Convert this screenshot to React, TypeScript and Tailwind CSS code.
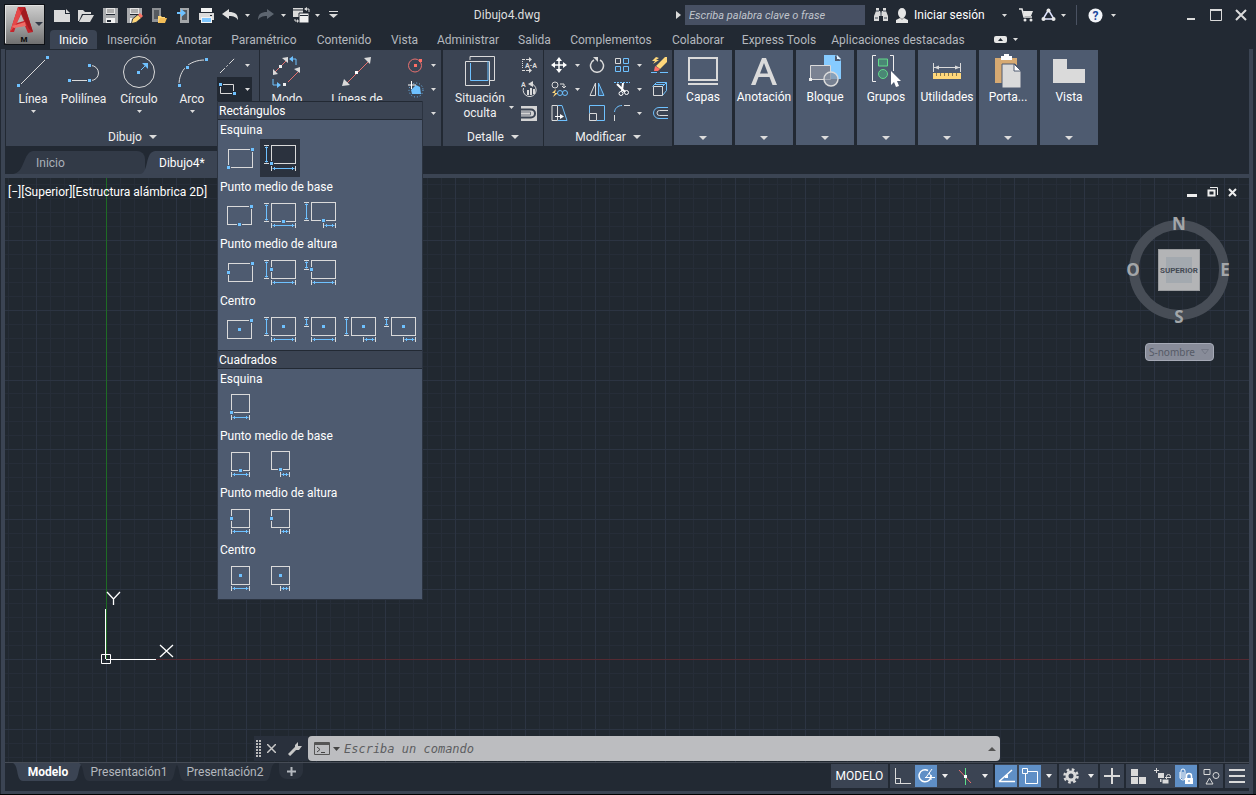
import type { ReactNode } from "react";
import clsx from "clsx";

const L = "#dadada";
const B = "#6ec1ff";

function Svg({ w, h, children }: { w: number; h: number; children: ReactNode }) {
  return (
    <svg width={w} height={h} viewBox={`0 0 ${w} ${h}`} fill="none" className="block shrink-0" aria-hidden="true">
      {children}
    </svg>
  );
}

function Caret({ big = false }: { big?: boolean }) {
  return big ? (
    <Svg w={8} h={4}><path d="M0 0h8L4 4z" fill="#dcdcdc" /></Svg>
  ) : (
    <Svg w={5} h={3}><path d="M0 0h5L2.500 3z" fill="#dcdcdc" /></Svg>
  );
}

function Btn({ label, className, children }: { label: string; className?: string; children: ReactNode }) {
  return (
    <button type="button" aria-label={label} title={label} className={clsx("flex shrink-0 items-center justify-center", className)}>
      {children}
    </button>
  );
}

function Dot({ x, y, halo = "#3b4453" }: { x: number; y: number; halo?: string }) {
  return (
    <>
      <rect x={x - 2.5} y={y - 2.5} width={5} height={5} fill={halo} />
      <rect x={x - 1.5} y={y - 1.5} width={3} height={3} fill={B} />
    </>
  );
}

/* ---------- Barra de título ---------- */

const quickAccess: { label: string; width: string; icon: ReactNode }[] = [
  { label: "Nuevo", width: "w-6", icon: <Svg w={18} h={16}><path d="M1 3h11v4h5v8H1zM13 2l4 4h-4z" fill={L} /></Svg> },
  { label: "Abrir", width: "w-6", icon: <Svg w={18} h={16}><path d="M1 14V3h5l2 2h6v2H5L2 14z" fill={L} /><path d="M6 8h11l-4 7H2z" fill={L} /></Svg> },
  { label: "Guardar", width: "w-6", icon: <Svg w={17} h={17}><path d="M1 1h3v7h9V1h3v15H1z" fill="#a9abae" /><path d="M4 1h9v6H4z" fill="#e4e4e4" /><path d="M1 8h15v2H1z" fill="#a9abae" /><path d="M4 11h9v5H4z" fill="#f2f2f2" /><path d="M5 13h4v2H5z" fill="#222933" /><path d="M5 3h7M5 5h7" stroke="#777" /></Svg> },
  { label: "Guardar como", width: "w-6", icon: <Svg w={17} h={17}><path d="M1 1h3v7h9V1h3v8l-6 7H1z" fill="#a9abae" /><path d="M4 1h9v6H4z" fill="#e4e4e4" /><path d="M5 3h7M5 5h7" stroke="#777" /><path d="M4 11h7l-5 5H4z" fill="#f2f2f2" /><path d="M5 17l1-5 6-5 4 4-6 5z" fill="#222933" /><path d="M6 16l1-4 5-4 3 3-5 4z" fill="#ffd77a" /><path d="M12 8l2-2 3 3-2 2z" fill="#ff7466" /></Svg> },
  { label: "Abrir desde web", width: "w-6", icon: <Svg w={17} h={17}><path d="M2 1h9v14H2z" fill="#8d9094" /><path d="M4 3h5v9H4z" fill="#555a60" /><path d="M8 9h3l1 1h3v6H8z" fill="#ffd77a" /><path d="M10 11h7l-2 5H8z" fill="#f3bd57" /></Svg> },
  { label: "Guardar en web", width: "w-6", icon: <Svg w={17} h={17}><path d="M6 1h9v15H6z" fill="#a4a7aa" /><path d="M8 3h5v10H8z" fill="#555a60" /><path d="M3 5h4V2l5 4-5 4V7H3z" fill={B} /></Svg> },
  { label: "Trazar", width: "w-6", icon: <Svg w={17} h={17}><path d="M3 1h11v4H3z" fill="#f2f2f2" /><path d="M1 6h15v7H1z" fill="#dadada" /><path d="M12 8h2v1h-2z" fill="#222933" /><path d="M3 10h11v6H3z" fill="#f2f2f2" /><path d="M4 11h9v4H4z" fill="#7ec6ff" /></Svg> },
  { label: "Deshacer", width: "w-6", icon: <Svg w={17} h={13}><path d="M0 5l7-5v3c6 0 9 2 9 8-2-3-4-4-9-4v3z" fill="#e0e0e0" /></Svg> },
  { label: "Opciones de deshacer", width: "w-[10px]", icon: <Caret /> },
  { label: "Rehacer", width: "w-[26px]", icon: <Svg w={17} h={13}><path d="M17 5l-7-5v3C4 3 1 5 1 11c2-3 4-4 9-4v3z" fill="#5d6570" /></Svg> },
  { label: "Opciones de rehacer", width: "w-[10px]", icon: <Caret /> },
  { label: "Cambiar ventana", width: "w-[26px]", icon: <Svg w={18} h={16}><path d="M1 1h10v9H1z" fill="#dadada" /><path d="M1 3h10" stroke="#222933" /><path d="M7 6h10v10H7z" fill="#f0f0f0" stroke="#222933" /><path d="M8 8.500h8" stroke="#222933" /><path d="M13 2h4v3M3 12v2h3" stroke={L} /><path d="M15 0v4l-3-2zM5 12v4l2-2z" fill={L} /></Svg> },
  { label: "Ventanas", width: "w-[6px]", icon: <Caret /> },
  { label: "Personalizar barra", width: "w-[26px]", icon: <Svg w={9} h={8}><path d="M0 .5h9" stroke={L} /><path d="M0 3h9L4.500 7z" fill={L} /></Svg> },
];

function TitleBar() {
  return (
    <div className="flex h-[30px] items-center">
      {quickAccess.map((q) => (
        <Btn key={q.label} label={q.label} className={clsx("h-6", q.width)}>{q.icon}</Btn>
      ))}
      <h1 className="flex-1 pr-2 text-center text-xs font-normal text-[#dedede]">Dibujo4.dwg</h1>
      <Svg w={5} h={8}><path d="M0 0v8l5-4z" fill={L} /></Svg>
      <input
        type="text"
        aria-label="Buscar"
        placeholder="Escriba palabra clave o frase"
        className="ml-1 h-5 w-[180px] bg-[#475063] px-1 text-[11px] italic text-white outline-none placeholder:text-[#c0c5cc]"
      />
      <Btn label="Búsqueda" className="ml-[6px] h-6 w-5">
        <Svg w={16} h={16}>
          <path d="M3 1h3v3h1l1 2 1-2h1V1h3v3l2 5v5h-5V9H6v5H1V9l2-5z" fill="#dadada" />
          <path d="M3 4h3M10 4h3M2 11h3M11 11h3M8 5v4" stroke="#3b4453" />
        </Svg>
      </Btn>
      <button type="button" className="ml-1 flex h-6 items-center gap-[5px] text-xs text-white">
        <Svg w={14} h={15}><ellipse cx="7" cy="5" rx="4" ry="5" fill="#e6e6e6" /><path d="M5 8h4v3H5z" fill="#e6e6e6" /><path d="M1 15v-3l4-2h4l4 2v3z" fill="#e6e6e6" /><path d="M5 9.500l2 2 2-2" stroke="#888" /></Svg>
        <span className="w-[76px] whitespace-nowrap text-left">Iniciar sesión</span>
      </button>
      <Btn label="Cuenta" className="ml-1 h-6 w-5"><Caret /></Btn>
      <Btn label="Tienda" className="h-6 w-6">
        <Svg w={15} h={14}><path d="M0 1h3l2 8h8" stroke="#e6e6e6" strokeWidth="1.500" /><path d="M4 3h10l-2 5H5z" fill="#e6e6e6" /><circle cx="6" cy="12" r="1.500" fill="#e6e6e6" /><circle cx="12" cy="12" r="1.500" fill="#e6e6e6" /></Svg>
      </Btn>
      <Btn label="Aplicaciones" className="h-6 w-5">
        <Svg w={15} h={14}><path d="M7.500 2L2 11h11z" stroke="#dfe3ff" strokeWidth="1.500" /><circle cx="7.500" cy="2.500" r="2" fill="#e6e6e6" /><circle cx="2.500" cy="11" r="2" fill="#e6e6e6" /><circle cx="12.500" cy="11" r="2" fill="#e6e6e6" /></Svg>
      </Btn>
      <Btn label="Más aplicaciones" className="h-6 w-[10px]"><Caret /></Btn>
      <span className="ml-2 h-5 w-px bg-[#4a5262]" />
      <Btn label="Ayuda" className="ml-2 h-6 w-5">
        <svg width="15" height="15" viewBox="0 0 15 15" aria-hidden="true">
          <circle cx="7.500" cy="7.500" r="7" fill="#f2f4f8" />
          <text x="7.500" y="12" textAnchor="middle" fontSize="12" fontWeight="700" fill="#1d4a9e">?</text>
        </svg>
      </Btn>
      <Btn label="Más ayuda" className="h-6 w-4"><Caret /></Btn>
      <Btn label="Minimizar" className="ml-[57px] h-6 w-[25px]"><Svg w={8} h={9}><path d="M0 7h8v2H0z" fill={L} /></Svg></Btn>
      <Btn label="Maximizar" className="h-6 w-[25px]"><Svg w={12} h={12}><path d="M.5 1h11v10.500H.5z" stroke={L} /><path d="M0 1h12" stroke={L} strokeWidth="2" /></Svg></Btn>
      <Btn label="Cerrar" className="mr-[3px] h-6 w-[25px]"><Svg w={12} h={12}><path d="M1 1l10 10M11 1L1 11" stroke={L} strokeWidth="2" /></Svg></Btn>
    </div>
  );
}

const ribbonTabs = [
  { name: "Inicio", width: "w-[47px]" },
  { name: "Inserción", width: "w-[69px]" },
  { name: "Anotar", width: "w-[56px]" },
  { name: "Paramétrico", width: "w-[84px]" },
  { name: "Contenido", width: "w-[76px]" },
  { name: "Vista", width: "w-[45px]" },
  { name: "Administrar", width: "w-[82px]" },
  { name: "Salida", width: "w-[51px]" },
  { name: "Complementos", width: "w-[102px]" },
  { name: "Colaborar", width: "w-[72px]" },
  { name: "Express Tools", width: "w-[90px]" },
  { name: "Aplicaciones destacadas", width: "w-[148px]" },
];

function RibbonTabs() {
  return (
    <nav className="flex h-[19px] items-stretch text-xs">
      {ribbonTabs.map((t, i) => (
        <button
          key={t.name}
          type="button"
          className={clsx(
            "flex shrink-0 items-center justify-center whitespace-nowrap leading-4",
            t.width,
            i === 0 ? "rounded-t-sm bg-[#3b4453] text-white" : "text-[#b4b8be]"
          )}
        >
          {t.name}
        </button>
      ))}
      <Btn label="Minimizar cinta" className="ml-[22px] gap-[6px]">
        <Svg w={13} h={7}><rect width="13" height="7" rx="2" fill="#e6e6e6" /><path d="M4 5h5L6.500 2z" fill="#222933" /></Svg>
        <Caret />
      </Btn>
    </nav>
  );
}

function AppButton() {
  return (
    <button type="button" aria-label="Menú de la aplicación" className="block h-[41px] w-[41px]">
      <svg width="41" height="41" viewBox="0 0 41 41" aria-hidden="true" className="block">
        <defs>
          <linearGradient id="app-bg" x1="0" y1="0" x2="0" y2="1">
            <stop offset="0" stopColor="#cfcfcf" />
            <stop offset="0.5" stopColor="#a4a4a4" />
            <stop offset="1" stopColor="#6e6e6e" />
          </linearGradient>
        </defs>
        <rect x="0.5" y="0.5" width="40" height="40" fill="url(#app-bg)" stroke="#0e1116" />
        <path d="M1.500 39V1.500H39" fill="none" stroke="#e2e2e2" />
        <path d="M6 28L14 3h7l8 25-5 1-3-7h-9l-2 6z" fill="#c3242b" />
        <path d="M14 3l3 6-4 10-3 4-4 5z" fill="#e5484a" />
        <path d="M17 10l-4 9 7-2z" fill="#b9b9b9" />
        <path d="M21 3l8 25-4-3-8-16z" fill="#a11a20" />
        <path d="M8 22l13-4 1 4-12 2z" fill="#ef6b66" />
        <path d="M31 18h8l-4 4z" fill="#343b47" />
        <text x="20" y="38" textAnchor="middle" fontSize="8" fontWeight="800" fill="#111">M</text>
      </svg>
    </button>
  );
}

/* ---------- Cinta de opciones ---------- */

function BigTool({ label, width, icon, caret = true }: { label: string; width: string; icon: ReactNode; caret?: boolean }) {
  return (
    <button type="button" className={clsx("flex shrink-0 flex-col items-center pt-px text-xs text-[#f0f0f0]", width)}>
      <span className="flex h-9 items-center">{icon}</span>
      <span className="mt-[2px] whitespace-nowrap leading-[14px]">{label}</span>
      {caret && <span className="mt-1"><Caret /></span>}
    </button>
  );
}

function Panel({ title, className, children }: { title: string; className: string; children: ReactNode }) {
  return (
    <section className={clsx("flex h-24 shrink-0 flex-col bg-[#3b4453]", className)}>
      <div className="flex h-[77px] pt-[3px]">{children}</div>
      <button type="button" className="flex h-[19px] items-center justify-center gap-[7px] text-xs text-[#f0f0f0]">
        {title}
        {title && <Caret big />}
      </button>
    </section>
  );
}

const modifyTools: { label: string; caret: boolean; icon: ReactNode }[] = [
  { label: "Desplazar", caret: true, icon: <Svg w={16} h={16}><path d="M8 2v12M2 8h12" stroke="#fff" strokeWidth="1.500" /><path d="M8 0l3 4H5zM8 16l3-4H5zM0 8l4-3v6zM16 8l-4-3v6z" fill="#fff" /></Svg> },
  { label: "Girar", caret: false, icon: <Svg w={16} h={16}><path d="M11 3a6.500 6.500 0 1 1-6 0" stroke={L} strokeWidth="1.500" /><path d="M4 0h5v5z" fill={L} /></Svg> },
  { label: "Matriz", caret: true, icon: <Svg w={16} h={16}><path d="M1.500 1.500h5v5h-5z" stroke={L} /><path d="M9.500 1.500h5v5h-5zM1.500 9.500h5v5h-5zM9.500 9.500h5v5h-5z" stroke={B} /></Svg> },
  { label: "Borrar", caret: false, icon: <Svg w={17} h={17}><path d="M16 0v5l-7 7-4-3 9-9z" fill="#ffd77a" /><path d="M4 9l5 3-2 2H3z" fill="#ff6f66" /><path d="M5 0L1 4h3L2 7l6-4H5l3-2z" fill="#ffd77a" /><path d="M0 15.500h6M9 15.500h8" stroke={B} /></Svg> },
  { label: "Copiar", caret: true, icon: <Svg w={17} h={17}><circle cx="4" cy="4" r="3" stroke={L} /><path d="M9 3h4v4M11 5l2 2 2-2" stroke={L} /><path d="M5 8l-4 4h3l-2 4 5-4H4z" fill="#ffd77a" /><circle cx="9" cy="12" r="2.500" stroke={B} /><circle cx="14" cy="12" r="2.500" stroke={B} /></Svg> },
  { label: "Simetría", caret: false, icon: <Svg w={16} h={16}><path d="M6.500 2v12.500H1z" stroke={L} /><path d="M9.500 2v12.500H15z" fill="#3f5f80" stroke={B} /></Svg> },
  { label: "Recortar", caret: true, icon: <Svg w={16} h={16}><path d="M0 1.500h16" stroke={B} strokeDasharray="2 1" /><path d="M3 3l8 8M9 2l-1 8" stroke="#fff" strokeWidth="2" /><circle cx="7" cy="12.500" r="2" stroke="#fff" /><circle cx="12.500" cy="11.500" r="2" stroke="#fff" /></Svg> },
  { label: "Alargar", caret: false, icon: <Svg w={17} h={16}><path d="M1.500 5.500l4-4h10v8l-4 5M11.500 5.500l4-4M3 3.500h10" stroke={B} /><path d="M2.500 5.500h9v9h-9z" stroke={L} /></Svg> },
  { label: "Estirar", caret: false, icon: <Svg w={17} h={16}><path d="M1 .5h5.500v15H1z" stroke={L} /><path d="M7 .5h4l5 15H7" stroke={B} /><path d="M4 11.500h6" stroke="#fff" /><path d="M9 9l4 2.500L9 14z" fill="#fff" /></Svg> },
  { label: "Escala", caret: false, icon: <Svg w={16} h={16}><path d="M.5 8V.5h15v15H8" stroke={B} /><path d="M.5 8.500h7v7h-7z" stroke={L} /></Svg> },
  { label: "Empalme", caret: true, icon: <Svg w={16} h={16}><path d="M.5 7C1 3 4 .5 8 .5" stroke={B} /><path d="M10 .5h6M.5 10v6" stroke={L} /></Svg> },
  { label: "Desfase", caret: false, icon: <Svg w={17} h={14}><path d="M17 1.500H8a5.500 5.500 0 0 0 0 11h9" stroke={B} /><path d="M17 4.500H8.500a2.500 2.500 0 0 0 0 5H17" stroke={L} /></Svg> },
];

const collapsedPanels: { name: string; icon: ReactNode }[] = [
  { name: "Capas", icon: <Svg w={32} h={32}><path d="M2 3h28v22H2z" stroke="#dadada" strokeWidth="2" /><path d="M1 29h30" stroke="#dadada" strokeWidth="2" /></Svg> },
  { name: "Anotación", icon: <Svg w={32} h={32}><path d="M3 30L14 3h4l11 27h-4.500l-3-8h-11l-3 8zM12 18.500h8L16 8z" fill="#dadada" /></Svg> },
  { name: "Bloque", icon: <Svg w={33} h={34}><path d="M15 1h12l5 5v19H15z" fill="#86cbff" /><path d="M26 1v6h6z" fill="#4e5b70" /><path d="M28 1v4h4z" fill="#e4f3ff" /><path d="M1.500 11.500h20v14h-20z" fill="#7a8292" stroke="#dadada" /><circle cx="22" cy="25" r="7" fill="#8890a0" fillOpacity=".7" stroke="#dadada" strokeWidth="1.500" /><path d="M0 24h3v3H0z" fill="#eee" /></Svg> },
  { name: "Grupos", icon: <Svg w={32} h={34}><path d="M6 1.500H2.500v26H6M20 1.500h3.500V17" stroke="#eee" /><path d="M8.500 5h9v7h-9z" fill="#4a8775" stroke="#62d98a" /><circle cx="13" cy="20" r="4.500" fill="#4a8775" stroke="#62d98a" /><path d="M21 17v14l3-3 2 5 3-1-2-5h4z" fill="#fff" /></Svg> },
  { name: "Utilidades", icon: <Svg w={30} h={34}><path d="M1.500 9v9M28.500 9v9M2 13.500h26" stroke="#dadada" /><path d="M2 13.500l5-2v4zM28 13.500l-5-2v4z" fill="#dadada" /><path d="M1 19h28v6H1z" fill="#ffd77a" /><path d="M4.500 19v3M8.500 19v3M12.500 19v3M16.500 19v3M20.500 19v3M24.500 19v3" stroke="#8a7a52" /></Svg> },
  { name: "Porta...", icon: <Svg w={28} h={34}><path d="M1 4h22v25H1z" fill="#d7aa72" /><path d="M7 2h3V0h5v2h3v4H7z" fill="#fff" /><path d="M8 10h13l6 6v18H8z" fill="#dadada" stroke="#4e5b70" /><path d="M20 10v7h7z" fill="#fff" stroke="#4e5b70" /></Svg> },
  { name: "Vista", icon: <Svg w={34} h={26}><path d="M1 1h14v10h18v14H1z" fill="#dadada" /></Svg> },
];

function Ribbon() {
  return (
    <div className="flex gap-[2px] pl-px pt-px">
      <Panel title="Dibujo" className="w-[253px]">
        <BigTool label="Línea" width="w-[54px]" icon={<Svg w={34} h={34}><path d="M3 31L31 3" stroke={L} /><Dot x={2.5} y={30.5} /><Dot x={31.5} y={2.5} /></Svg>} />
        <BigTool label="Polilínea" width="w-[47px]" caret={false} icon={<Svg w={34} h={34}><path d="M1 25.500h20M23 10.500h1a7.500 7.500 0 0 1 0 15h-1" stroke={L} /><Dot x={2.5} y={25.5} /><Dot x={22.5} y={25.5} /><Dot x={22.5} y={10.5} /></Svg>} />
        <BigTool label="Círculo" width="w-[64px]" icon={<Svg w={34} h={34}><circle cx="17" cy="17" r="15.500" stroke={L} /><Dot x={16.5} y={17.5} /><path d="M19 15l5-5" stroke={B} /><path d="M20 8h6v6z" fill={B} /></Svg>} />
        <BigTool label="Arco" width="w-[42px]" icon={<Svg w={34} h={34}><path d="M4 30C4 15 14 5 30 5" stroke={L} /><Dot x={4.5} y={30.5} /><Dot x={12.5} y={12.5} /><Dot x={31.5} y={4.5} /></Svg>} />
        <div className="ml-1 flex w-[35px] flex-col">
          <Btn label="Línea auxiliar" className="h-6 gap-[9px]"><Svg w={17} h={17}><path d="M1 16L16 1" stroke={L} strokeDasharray="7 2 2 2" /></Svg><Caret /></Btn>
          <div className="relative">
            <Btn label="Rectángulo" className="h-6 w-full gap-[9px] bg-[#222933]"><Svg w={17} h={12}><path d="M1.500 1.500h13v9h-13z" stroke={L} /><Dot x={1.5} y={1.5} halo="#222933" /><Dot x={15.5} y={10.5} halo="#222933" /></Svg><Caret /></Btn>
            <RectangleMenu />
          </div>
        </div>
      </Panel>
      <Panel title="" className="-ml-px w-[181px]">
        <BigTool label="Modo" width="w-[54px]" icon={<Svg w={34} h={34}><path d="M5 17L17 5M18 27l11-11" stroke="#e8716f" /><path d="M18 2v6l-6-5zM3 20v-6l5 5zM30 12v6l-6-4z" fill={L} /><path d="M26 10V4h-5M3 24v6h5" stroke={B} /><path d="M23 1v6l-4-3zM7 27v6l4-3z" fill={B} /><path d="M9 10h3v3H9zM13 28h3v3h-3z" fill="#eee" /></Svg>} />
        <BigTool label="Líneas de" width="w-[86px]" icon={<Svg w={34} h={34}><path d="M6 29L28 7" stroke="#e8716f" /><path d="M31 2l-1 7-6-6zM2 31l2-7 6 6z" fill={L} /><path d="M15 16h3v3h-3z" fill="#fff" /></Svg>} />
        <div className="ml-[7px] flex flex-col">
          <Btn label="Círculo de centro" className="h-6 gap-[7px]"><Svg w={17} h={17}><circle cx="8" cy="8.500" r="6.500" stroke="#e8716f" /><path d="M7 7h3v3H7zM12 2h3v3h-3z" fill="#ff6f66" /></Svg><Caret /></Btn>
          <Btn label="Sombreado" className="h-6 gap-[7px]"><Svg w={17} h={17}><path d="M9 4l4 2 1 7H5l-1-4z" fill={B} /><circle cx="9" cy="9" r="7" stroke={B} strokeDasharray="1 2" /><path d="M4.500 0v8M1 4h8" stroke="#fff" /></Svg><Caret /></Btn>
          <Btn label="Región" className="h-6 gap-[7px]"><Svg w={17} h={17}><path d="M2 4h12v10H2z" stroke="#e8716f" strokeDasharray="2 2" /></Svg><Caret /></Btn>
        </div>
      </Panel>
      <Panel title="Detalle" className="w-[100px]">
        <button type="button" className="flex w-[76px] shrink-0 items-start pl-2 text-xs text-[#f0f0f0]">
          <span className="flex w-[58px] flex-col items-center leading-[15px]">
            <span className="flex h-9 items-center">
              <Svg w={32} h={32}><path d="M6 5V1.500h24.500v24H26" stroke={L} /><path d="M1.500 6.500h24v24h-24z" stroke={L} /><path d="M6.500 8v17.500H24V6" stroke={B} /></Svg>
            </span>
            <span className="mt-[2px]">Situación oculta</span>
          </span>
          <span className="mt-[53px]"><Caret /></span>
        </button>
        <div className="flex flex-col">
          <Btn label="Texto" className="h-6 w-5"><Svg w={17} h={16}><path d="M1.500 4v8" stroke={L} strokeDasharray="1 1" /><path d="M1 2.500h8M1 13.500h8" stroke={L} strokeDasharray="3 1" /><path d="M8 0l3 2.500L8 5zM8 11l3 2.500L8 16z" fill={L} /><text x="10" y="11" textAnchor="middle" fontSize="7" fontWeight="700" fill={L}>A-A</text></Svg></Btn>
          <Btn label="Ángulo" className="h-6 w-5"><Svg w={17} h={17}><path d="M11 3a6.500 6.500 0 1 1-8.500 4" stroke={L} /><path d="M7 3l5-3v6z" fill={L} /><path d="M7 9v5M10 7v7M13 8v5" stroke={L} strokeWidth="2" /><text x="0" y="6" fontSize="7" fontWeight="700" fill={L}>A</text></Svg></Btn>
          <Btn label="Detalle" className="h-6 w-5"><Svg w={17} h={17}><path d="M0 1h16v15H0z" fill="#d4d4d4" /><path d="M0 4.500h10a4 4 0 0 1 0 8H0" stroke="#3b4453" strokeWidth="2" /><path d="M0 7h9.500v3H0" stroke="#6b717c" /></Svg></Btn>
        </div>
      </Panel>
      <Panel title="Modificar" className="-ml-px w-[128px]">
        <div className="grid h-[72px] grid-cols-[30px_6px_34px_16px_18px_22px] grid-rows-3 items-center justify-items-center">
          {modifyTools.map((t, i) => (
            <div key={t.label} className="contents">
              <Btn label={t.label}>{t.icon}</Btn>
              {i % 2 === 0 && <span>{t.caret && <Caret />}</span>}
            </div>
          ))}
        </div>
      </Panel>
      {collapsedPanels.map((p) => (
        <button
          key={p.name}
          type="button"
          className="mr-px flex h-[95px] w-[58px] shrink-0 flex-col items-center bg-[#4e5b70] pb-[5px] pt-[3px] text-xs text-white"
        >
          <span className="flex h-9 items-center">{p.icon}</span>
          <span className="leading-4">{p.name}</span>
          <span className="mt-auto"><Caret big /></span>
        </button>
      ))}
    </div>
  );
}

/* ---------- Menú de rectángulos ---------- */

type Shape = {
  x?: number;
  y?: number;
  square?: boolean;
  dots: ("tr" | "bl" | "bottom" | "left" | "center")[];
  v?: "full" | "half";
  h?: "full" | "half";
  active?: boolean;
};

function ShapeIcon({ x = 11.5, y = 7.5, square, dots, v, h, active }: Shape) {
  const w = square ? 18 : 24;
  const ht = 18;
  const pos = {
    tr: [x + w, y],
    bl: [x, y + ht],
    bottom: [x + w / 2, y + ht],
    left: [x, y + ht / 2],
    center: [x + w / 2, y + ht / 2],
  };
  const vEnd = v === "half" ? y + ht / 2 : y + ht;
  const hStart = h === "half" ? x + w / 2 : x;
  const snap = (n: number) => Math.floor(n) + 0.5;
  return (
    <Svg w={40} h={38}>
      <rect x={x} y={y} width={w} height={ht} stroke={L} />
      {v && (
        <>
          <path d={`M4 ${y}h5M4 ${vEnd}h5`} stroke={L} />
          <path d={`M6.500 ${y + 1}V${vEnd - 1}M5 ${y + 2}h3M5 ${vEnd - 2}h3`} stroke={B} />
        </>
      )}
      {h && (
        <>
          <path d={`M${hStart} 27v5M${x + w} 27v5`} stroke={L} />
          <path d={`M${hStart + 1} 29.500H${x + w - 1}M${hStart + 3} 28v3M${x + w - 3} 28v3`} stroke={B} />
        </>
      )}
      {dots.map((d) => <Dot key={d} x={snap(pos[d][0])} y={snap(pos[d][1])} halo={active ? "#2b323e" : "#4e5b70"} />)}
    </Svg>
  );
}

const menu: { title: string; groups: { name: string; shapes: Shape[] }[] }[] = [
  {
    title: "Rectángulos",
    groups: [
      { name: "Esquina", shapes: [{ x: 8.5, y: 10.5, dots: ["tr", "bl"] }, { y: 6.5, dots: ["bl"], v: "full", h: "full", active: true }] },
      { name: "Punto medio de base", shapes: [{ x: 7.5, y: 10.5, dots: ["tr", "bottom"] }, { dots: ["bottom"], v: "full", h: "full" }, { y: 6.5, dots: ["bottom"], v: "full", h: "half" }] },
      { name: "Punto medio de altura", shapes: [{ x: 8.5, y: 10.5, dots: ["tr", "left"] }, { dots: ["left"], v: "full", h: "full" }, { dots: ["left"], v: "half", h: "full" }] },
      { name: "Centro", shapes: [{ x: 7.5, y: 10.5, dots: ["tr", "center"] }, { dots: ["center"], v: "full", h: "full" }, { dots: ["center"], v: "half", h: "full" }, { dots: ["center"], v: "full", h: "half" }, { dots: ["center"], v: "half", h: "half" }] },
    ],
  },
  {
    title: "Cuadrados",
    groups: [
      { name: "Esquina", shapes: [{ square: true, y: 6.5, dots: ["bl"], h: "full" }] },
      { name: "Punto medio de base", shapes: [{ square: true, dots: ["bottom"], h: "full" }, { square: true, y: 6.5, dots: ["bottom"], h: "half" }] },
      { name: "Punto medio de altura", shapes: [{ square: true, dots: ["left"], h: "full" }, { square: true, dots: ["left"], h: "half" }] },
      { name: "Centro", shapes: [{ square: true, dots: ["center"], h: "full" }, { square: true, dots: ["center"], h: "half" }] },
    ],
  },
];

function RectangleMenu() {
  return (
    <div className="absolute left-0 top-6 z-20 w-[206px] border border-t-0 border-[#2b3340] bg-[#4e5b70] text-xs text-white">
      {menu.map((section) => (
        <section key={section.title} className="pb-[2px]">
          <h2 className="flex h-[19px] items-center border-y border-[#222933] bg-[#3b4453] px-px">{section.title}</h2>
          {section.groups.map((g) => (
            <div key={g.name} className="px-[2px]">
              <h3 className="h-[19px] leading-[20px]">{g.name}</h3>
              <div className="flex">
                {g.shapes.map((s, i) => (
                  <Btn key={i} label={`${g.name} ${i + 1}`} className={s.active ? "bg-[#2b323e]" : ""}>
                    <ShapeIcon {...s} />
                  </Btn>
                ))}
              </div>
            </div>
          ))}
        </section>
      ))}
    </div>
  );
}

/* ---------- Pestañas de archivo ---------- */

function FileTabs() {
  return (
    <div className="flex h-7 items-end pl-2 text-xs">
      <button type="button" className="flex h-[23px] text-[#aab0b9]">
        <Svg w={20} h={23}><path d="M0 23C12 22 10 1 20 0v23z" fill="#323a47" /></Svg>
        <span className="flex w-[112px] items-center rounded-tr-lg bg-[#323a47] pl-[3px]">Inicio</span>
      </button>
      <button type="button" className="-ml-1 flex h-[23px] text-white">
        <Svg w={14} h={23}><path d="M0 23C8 20 4 1 14 0v23z" fill="#3b4453" /></Svg>
        <span className="flex w-[90px] items-center rounded-tr-lg bg-[#3b4453] pl-1">Dibujo4*</span>
      </button>
    </div>
  );
}

/* ---------- Área de dibujo ---------- */

const STEP = 69.87;

function DrawingGrid() {
  const cols = Array.from({ length: 190 }, (_, i) => i - 7);
  const rows = Array.from({ length: 110 }, (_, i) => i - 35);
  const px = (n: number) => Math.round(101 + (n * STEP) / 5) + 0.5;
  const py = (n: number) => Math.round(481 + (n * STEP) / 5) + 0.5;
  return (
    <svg className="absolute inset-0 h-full w-full" aria-hidden="true" fill="none">
      {cols.map((n) => n % 5 !== 0 && <path key={n} d={`M${px(n)} 0V1500`} stroke="#262d38" />)}
      {rows.map((n) => n % 5 !== 0 && <path key={n} d={`M0 ${py(n)}H2600`} stroke="#262d38" />)}
      {cols.map((n) => n % 5 === 0 && <path key={n} d={`M${px(n)} 0V1500`} stroke="#2c3442" />)}
      {rows.map((n) => n % 5 === 0 && <path key={n} d={`M0 ${py(n)}H2600`} stroke="#2c3442" />)}
      <path d="M101.500 0V481" stroke="#1e6b24" />
      <path d="M101 481.500H2600" stroke="#542a32" />
      <path d="M100.500 431v50M101 481.500h50" stroke="#fff" />
      <path d="M96.500 476.500h9v9h-9z" stroke="#fff" />
      <path d="M102 414l6.500 7 6.500-7M108.500 421v6M155 467l13 12M168 467l-13 12" stroke="#fff" strokeWidth="1.300" />
    </svg>
  );
}

function ViewCube() {
  return (
    <div className="absolute right-4 top-9 flex flex-col items-center">
      <svg width="108" height="114" viewBox="0 0 108 114" aria-hidden="true" fontWeight="700" fill="#a3a6a9" className="overflow-visible">
        <circle cx="54" cy="56" r="45" fill="none" stroke="#474d56" strokeWidth="10" />
        <rect x="33.500" y="35.500" width="41" height="41" fill="#b3b4b6" stroke="#9a9c9f" />
        <rect x="41" y="43" width="26" height="26" fill="#a3a9af" />
        <g fontSize="17" textAnchor="middle" fontFamily="'Open Sans', sans-serif">
          <text x="54" y="16">N</text>
          <text x="54" y="109">S</text>
          <text x="8" y="62">O</text>
          <text x="100" y="62">E</text>
        </g>
        <text x="54" y="59" textAnchor="middle" fontSize="8" fill="#454b55">SUPERIOR</text>
      </svg>
      <button type="button" className="mt-[15px] flex h-[18px] w-[69px] items-center justify-center gap-[6px] rounded border border-[#a6aab6] bg-[#888c99] font-['Noto_Sans',sans-serif] text-[10px] text-[#555a66]">
        S-nombre
        <Svg w={8} h={6}><path d="M.5.5h7L4 5z" stroke="#747885" /></Svg>
      </button>
    </div>
  );
}

function CommandLine() {
  return (
    <div className="absolute bottom-px left-[249px] right-[249px] flex h-[25px]">
      <div className="flex w-[54px] items-center bg-[#29303c] pl-[2px]">
        <Svg w={5} h={18}><path d="M1 0v18M4 0v18" stroke="#bbb" strokeWidth="2" strokeDasharray="2 1" /></Svg>
        <Btn label="Cerrar línea de comando" className="ml-1.5"><Svg w={9} h={9}><path d="M0 0l9 9M9 0L0 9" stroke="#c8c8c8" strokeWidth="1.500" /></Svg></Btn>
        <Btn label="Personalizar" className="ml-3"><Svg w={14} h={14}><path d="M1 13l7-7" stroke="#c8c8c8" strokeWidth="3" /><path d="M7 7V3l3-3v4h4l-3 4H8z" fill="#c8c8c8" /></Svg></Btn>
      </div>
      <div className="flex flex-1 items-center rounded-sm bg-[#bcbdc0] pl-[6px] pr-1">
        <Btn label="Comandos recientes" className="gap-[3px]">
          <Svg w={16} h={13}><path d="M.5.5h15v12H.5z" stroke="#555" /><path d="M1 2h14" stroke="#555" strokeWidth="2" /><path d="M3 5l3 2.500L3 10M7 10.500h4" stroke="#444" /></Svg>
          <Svg w={7} h={4}><path d="M0 0h7L3.500 4z" fill="#444" /></Svg>
        </Btn>
        <input
          type="text"
          aria-label="Línea de comando"
          placeholder="Escriba un comando"
          className="ml-1 min-w-0 flex-1 bg-transparent font-['DejaVu_Sans_Mono','Liberation_Mono',monospace] text-xs italic text-[#333] outline-none placeholder:text-[#5c5d60]"
        />
        <Btn label="Historial"><Svg w={8} h={4}><path d="M0 4h8L4 0z" fill="#555" /></Svg></Btn>
      </div>
    </div>
  );
}

function Canvas() {
  return (
    <main className="relative min-h-[480px] flex-1 overflow-hidden border-t-4 border-[#3b4453] bg-[#212830]">
      <DrawingGrid />
      <p className="absolute left-[3px] top-[6px] whitespace-nowrap text-xs text-white">[−][Superior][Estructura alámbrica 2D]</p>
      <div className="absolute right-[7px] top-1 flex">
        <Btn label="Minimizar ventana gráfica" className="h-5 w-5"><Svg w={10} h={9}><path d="M0 6h10v3H0z" fill="#eee" /></Svg></Btn>
        <Btn label="Restaurar ventana gráfica" className="h-5 w-5"><Svg w={11} h={10}><path d="M3 .5h7.500V8" stroke="#eee" /><path d="M1.500 3.500h6v5h-6z" stroke="#eee" strokeWidth="2" /></Svg></Btn>
        <Btn label="Cerrar ventana gráfica" className="h-5 w-5"><Svg w={9} h={9}><path d="M1 1l7 7M8 1L1 8" stroke="#eee" strokeWidth="2" /></Svg></Btn>
      </div>
      <ViewCube />
      <CommandLine />
    </main>
  );
}

/* ---------- Barra de estado ---------- */

function LayoutTab({ label, width, active = false }: { label: string; width: string; active?: boolean }) {
  const fill = active ? "#3b4453" : "#2b323d";
  return (
    <button type="button" className={clsx("-mr-1 flex h-[18px]", active ? "font-bold text-white" : "text-[#b4b8be]")}>
      <Svg w={10} h={18}><path d="M0 0h10v18C3 18 6 3 0 0z" fill={fill} /></Svg>
      <span className={clsx("flex h-full items-center justify-center whitespace-nowrap", width, active ? "bg-[#3b4453]" : "bg-[#2b323d]")}>{label}</span>
      <Svg w={10} h={18}><path d="M10 0H0v18C7 18 4 3 10 0z" fill={fill} /></Svg>
    </button>
  );
}

function StatusBar() {
  return (
    <footer className="flex h-[29px] shrink-0 items-start border-t border-[#454b55] text-xs">
      <div className="flex pl-2">
        <LayoutTab label="Modelo" width="w-[50px]" active />
        <LayoutTab label="Presentación1" width="w-20" />
        <LayoutTab label="Presentación2" width="w-20" />
        <button type="button" aria-label="Nueva presentación" className="ml-2 flex h-4 w-6 items-center justify-center rounded-b-lg bg-[#2b323d]">
          <Svg w={9} h={9}><path d="M4.500 0v9M0 4.500h9" stroke="#b4b8be" strokeWidth="2" /></Svg>
        </button>
      </div>
      <div className="ml-auto mt-px flex h-6 gap-[2px]">
        <button type="button" className="w-[57px] bg-[#3b4453] text-white">MODELO</button>
        <div className="flex items-center bg-[#3b4453]">
          <Btn label="Orto" className="h-6 w-[25px]"><Svg w={16} h={16}><path d="M.5 0v15.500H16M.5 10.500h5v5" stroke={L} /></Svg></Btn>
          <Btn label="Rastreo polar" className="h-[22px] w-[22px] bg-[#5f8fc6]"><Svg w={17} h={16}><path d="M13 7a6 6 0 1 1-3-4.500" stroke="#fff" strokeWidth="1.500" /><path d="M8 9.500L14 1M7 9.500h10M11 5l2 3v4" stroke="#fff" /></Svg></Btn>
          <Btn label="Opciones polar" className="h-6 w-4"><Svg w={6} h={4}><path d="M0 0h6L3 4z" fill="#eee" /></Svg></Btn>
          <Btn label="Dibujo isométrico" className="h-6 w-6"><Svg w={14} h={17}><path d="M1 2l12 13" stroke="#e8716f" /><path d="M7.500 0v17" stroke="#5ce08a" /><path d="M6 7h3v3H6z" fill="#fff" /></Svg></Btn>
          <Btn label="Opciones isométricas" className="h-6 w-4"><Svg w={6} h={4}><path d="M0 0h6L3 4z" fill="#eee" /></Svg></Btn>
        </div>
        <div className="flex items-center bg-[#3b4453]">
          <Btn label="Rastreo de referencia" className="h-[22px] w-[22px] bg-[#5f8fc6]"><Svg w={17} h={14}><path d="M1 12.500L14 1M1 12.500h16" stroke="#fff" strokeWidth="1.500" /><path d="M7 6h3v3H7z" fill="#fff" /></Svg></Btn>
          <Btn label="Referencia a objetos" className="ml-[2px] h-[22px] w-[22px] bg-[#5f8fc6]"><Svg w={17} h={16}><path d="M6 3.500h9.500v12h-12V6M.5.500h5v5h-5z" stroke="#fff" /></Svg></Btn>
          <Btn label="Opciones de referencia" className="h-6 w-4"><Svg w={6} h={4}><path d="M0 0h6L3 4z" fill="#eee" /></Svg></Btn>
        </div>
        <div className="flex items-center bg-[#3b4453]">
          <Btn label="Espacio de trabajo" className="h-6 w-6">
            <Svg w={16} h={16}><circle cx="8" cy="8" r="4" stroke={L} strokeWidth="3" /><circle cx="8" cy="8" r="6.500" stroke={L} strokeWidth="2.500" strokeDasharray="2.600 2.500" /></Svg>
          </Btn>
          <Btn label="Cambiar espacio" className="h-6 w-[15px]"><Svg w={6} h={4}><path d="M0 0h6L3 4z" fill="#eee" /></Svg></Btn>
        </div>
        <Btn label="Supervisor de anotación" className="h-6 w-6 bg-[#3b4453]"><Svg w={16} h={16}><path d="M8 0v16M0 8h16" stroke={L} strokeWidth="2" /></Svg></Btn>
        <div className="flex items-center bg-[#3b4453]">
          <Btn label="Unidades" className="h-6 w-6"><Svg w={15} h={16}><path d="M0 1h7v7H0zM0 9h7v7H0zM8 9h7v7H8z" fill={L} /></Svg></Btn>
          <Btn label="Propiedades rápidas" className="h-6 w-[25px]"><Svg w={17} h={17}><path d="M2.500 0v5M0 2.500h5" stroke={L} /><path d="M4 5h6v5H4zM6 11h4v3H6zM11 9h5v1h-5z" fill={L} /><path d="M8 11h7v5H8z" fill={L} stroke="#3b4453" /><path d="M12.500 11V8.500a2 2 0 0 1 4 0V10" stroke={L} /></Svg></Btn>
          <Btn label="Bloquear interfaz" className="h-[22px] w-[22px] bg-[#5f8fc6]"><Svg w={16} h={17}><path d="M2 4v6a3 3 0 0 0 5 1V3a2 2 0 0 0-4 0v7M5 4v7" stroke="#fff" /><path d="M7 10h8v6H7z" fill="#fff" /><path d="M8.500 10V8a2.500 2.500 0 0 1 5 0v2" stroke="#fff" strokeWidth="1.500" /><path d="M11 12v2" stroke="#5f8fc6" /></Svg></Btn>
        </div>
        <Btn label="Aislar objetos" className="h-6 w-6 bg-[#3b4453]"><Svg w={17} h={17}><path d="M1 1.500h6v5H1zM6.500 10l3.500 6H3z" stroke={L} /><circle cx="13" cy="7.500" r="3" stroke={L} /></Svg></Btn>
        <Btn label="Personalización" className="h-6 w-6 bg-[#3b4453]"><Svg w={16} h={14}><path d="M0 1h16M0 7h16M0 13h16" stroke={L} strokeWidth="2" /></Svg></Btn>
      </div>
    </footer>
  );
}

export default function App() {
  return (
    <div className="flex min-h-screen flex-col border-b border-black bg-[#222933] font-['Roboto','Open_Sans',sans-serif]">
      <header className="flex">
        <div className="w-[50px] shrink-0 pl-1 pt-1"><AppButton /></div>
        <div className="min-w-0 flex-1">
          <TitleBar />
          <RibbonTabs />
        </div>
      </header>
      <div className="ml-px mr-[3px] flex flex-1 flex-col border-x-4 border-b-[3px] border-[#3b4453]">
        <Ribbon />
        <FileTabs />
        <Canvas />
        <StatusBar />
      </div>
    </div>
  );
}
